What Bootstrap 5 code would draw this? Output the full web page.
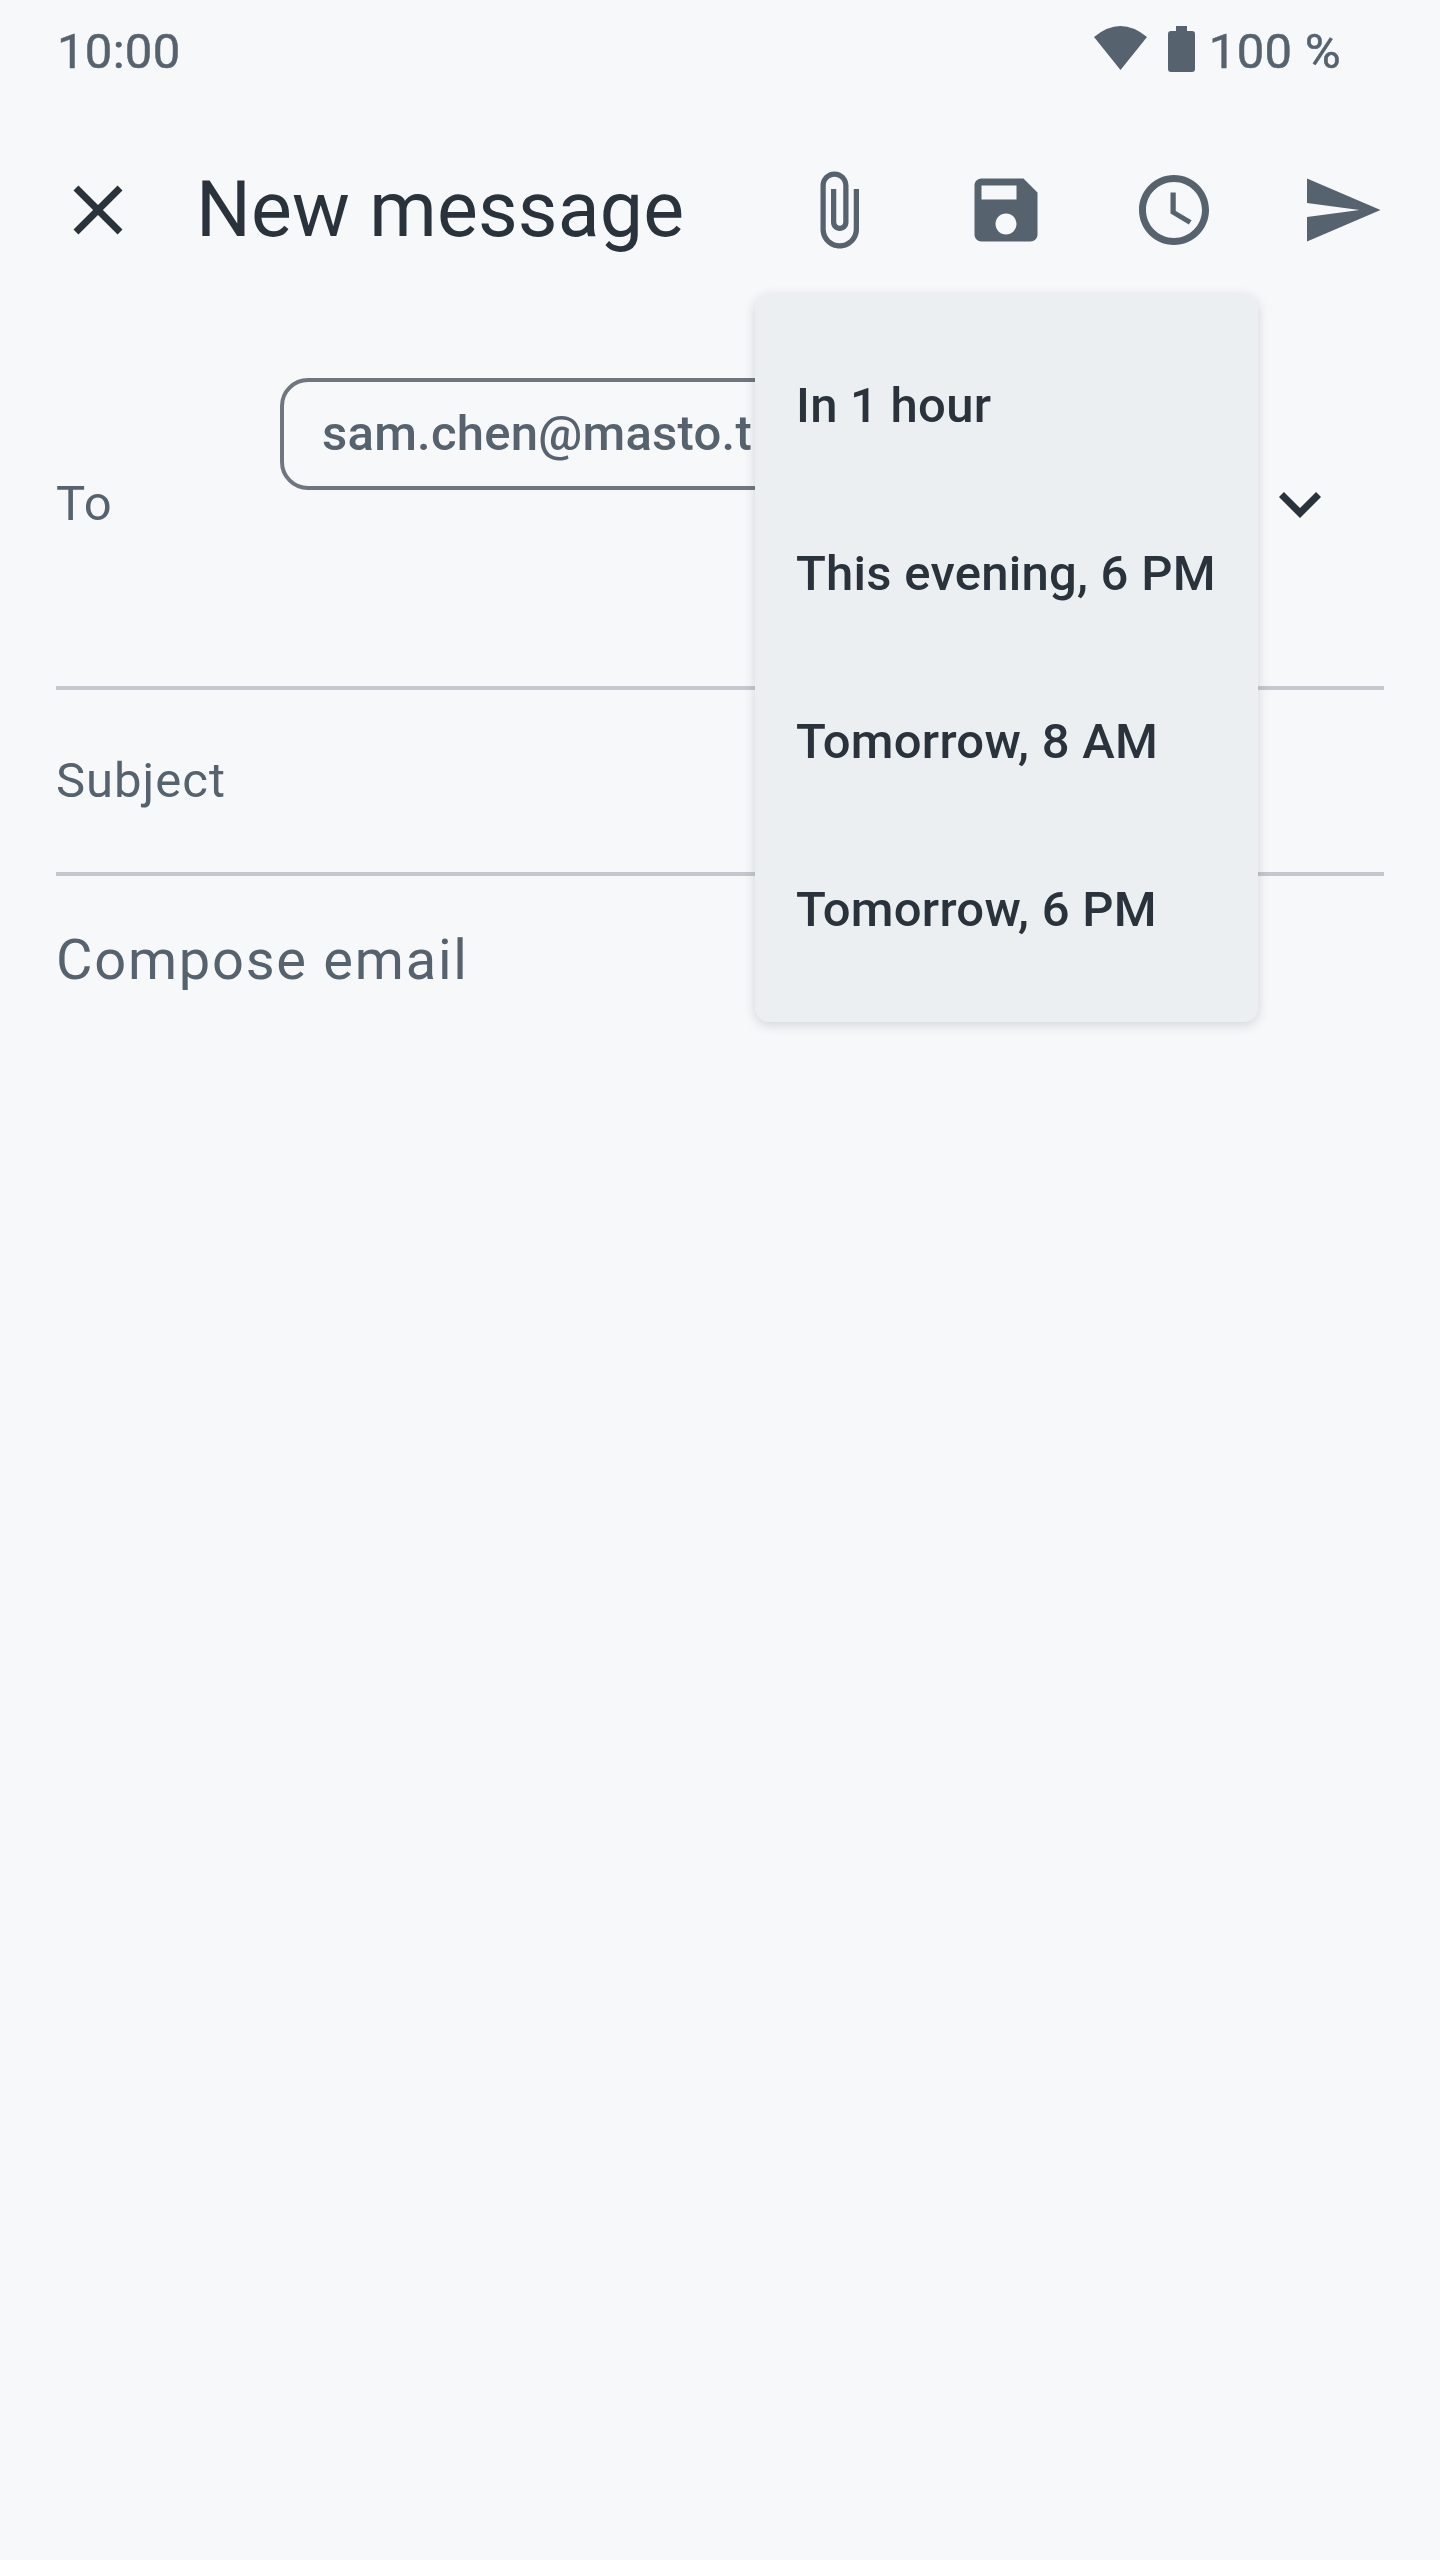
<!DOCTYPE html>
<html lang="en">
<head>
    <meta charset="UTF-8">
    <meta name="viewport" content="width=device-width, initial-scale=1.0">
    <title>New message</title>
    <link href="https://cdn.jsdelivr.net/npm/bootstrap@5.3.0/dist/css/bootstrap.min.css" rel="stylesheet">
    <style>
        body {
            background: #f7f8fa;
            font-family: Roboto, "Liberation Sans", sans-serif;
            color: #56626d;
        }
        .phone-screen {
            width: 1440px;
            height: 2560px;
            overflow: hidden;
        }
        .status-row {
            height: 112px;
            padding: 26px 99px 0 57px;
            font-size: 49px;
            line-height: 48px;
            letter-spacing: .3px;
            -webkit-text-stroke: .5px #56626d;
        }
        .status-time {
            padding-top: 2px;
        }
        .status-pct {
            padding-top: 2px;
            margin-left: 14px;
        }
        .battery-icon {
            margin-left: 21px;
        }
        .tool-row {
            height: 196px;
            padding: 0 56px;
        }
        .tool-title {
            margin-left: 56px;
            font-size: 77px;
            line-height: 90px;
            letter-spacing: .15px;
            color: #2a323c;
        }
        .tool-actions {
            gap: 84px;
        }
        .tool-icon {
            width: 84px;
            height: 84px;
            fill: #56626d;
            flex: none;
        }
        .close-icon, .chevron-icon {
            fill: #2a323c;
        }
        .field-row {
            margin: 0 56px;
            border-bottom: 4px solid #c4c8ce;
        }
        .to-row {
            height: 382px;
        }
        .subject-row {
            height: 186px;
        }
        .field-label {
            font-size: 49px;
            line-height: 56px;
            letter-spacing: 1px;
            width: 224px;
            flex: none;
        }
        .to-row .field-label {
            margin-top: 168px;
        }
        .subject-row .field-label {
            margin-top: 63px;
        }
        .recipient-chip {
            margin-top: 70px;
            width: 620px;
            height: 112px;
            padding-left: 38px;
            border: 4px solid #70767f;
            border-radius: 28px;
            font-size: 49px;
            font-weight: 500;
            line-height: 104px;
            letter-spacing: .25px;
            white-space: nowrap;
        }
        .chevron-icon {
            margin: 154px 42px 0 auto;
        }
        .compose-body {
            padding: 51px 56px 0;
            font-size: 56px;
            line-height: 66px;
            letter-spacing: 1.75px;
        }
        .dropdown-menu.send-later {
            top: 294px;
            left: 755px;
            width: 503px;
            padding: 28px 0;
            background: #eceff2;
            border: 0;
            border-radius: 14px;
            box-shadow: 0 3px 12px rgba(40, 50, 60, .18);
            font-size: 49px;
        }
        .send-later .dropdown-item {
            height: 168px;
            padding: 0 41px;
            line-height: 168px;
            letter-spacing: .25px;
            color: #2a323c;
            font-weight: 500;
        }
    </style>
</head>
<body>
    <div class="phone-screen position-relative">
        <!-- status bar -->
        <div class="status-row d-flex align-items-start">
            <span class="status-time">10:00</span>
            <svg class="ms-auto" width="53" height="44" viewBox="0 0 53 44"><path fill="#56626d" d="M26.5 44 0 11Q26.5-11 53 11Z"/></svg>
            <svg class="battery-icon" width="27" height="46" viewBox="0 0 27 46"><path fill="#56626d" d="M8 0h11v5h5a3 3 0 0 1 3 3v35a3 3 0 0 1-3 3H3a3 3 0 0 1-3-3V8a3 3 0 0 1 3-3h5z"/></svg>
            <span class="status-pct">100 %</span>
        </div>

        <!-- toolbar -->
        <div class="tool-row d-flex align-items-center">
            <svg class="tool-icon close-icon" viewBox="0 0 24 24"><path d="M19 6.41 17.59 5 12 10.59 6.41 5 5 6.41 10.59 12 5 17.59 6.41 19 12 13.41 17.59 19 19 17.59 13.41 12z"/></svg>
            <div class="tool-title">New message</div>
            <div class="tool-actions d-flex ms-auto">
                <svg class="tool-icon" viewBox="0 0 24 24"><path d="M16.5 6v11.5c0 2.21-1.79 4-4 4s-4-1.79-4-4V5c0-1.38 1.12-2.5 2.5-2.5s2.5 1.12 2.5 2.5v10.5c0 .55-.45 1-1 1s-1-.45-1-1V6H10v9.500c0 1.38 1.12 2.500 2.500 2.500s2.500-1.120 2.500-2.500V5c0-2.210-1.790-4-4-4S7 2.790 7 5v12.500c0 3.040 2.460 5.500 5.500 5.500s5.500-2.460 5.500-5.500V6h-1.500z"/></svg>
                <svg class="tool-icon" viewBox="0 0 24 24"><path d="M17 3H5c-1.110 0-2 .9-2 2v14c0 1.100.89 2 2 2h14c1.100 0 2-.9 2-2V7l-4-4zm-5 16c-1.660 0-3-1.340-3-3s1.340-3 3-3 3 1.340 3 3-1.340 3-3 3zm3-10H5V5h10v4z"/></svg>
                <svg class="tool-icon" viewBox="0 0 24 24"><path d="M11.990 2C6.470 2 2 6.480 2 12s4.470 10 9.990 10C17.520 22 22 17.520 22 12S17.520 2 11.990 2zM12 20c-4.420 0-8-3.580-8-8s3.580-8 8-8 8 3.580 8 8-3.580 8-8 8z"/><path d="M12.500 7H11v6l5.250 3.150.75-1.230-4.500-2.670z"/></svg>
                <svg class="tool-icon" viewBox="0 0 24 24"><path d="M2.010 21 23 12 2.010 3 2 10l15 2-15 2z"/></svg>
            </div>
        </div>

        <!-- compose fields -->
        <div class="field-row to-row d-flex align-items-start">
            <div class="field-label">To</div>
            <div class="recipient-chip">sam.chen@masto.t</div>
            <svg class="tool-icon chevron-icon" viewBox="0 0 24 24"><path d="M16.590 8.590 12 13.170 7.410 8.590 6 10l6 6 6-6z"/></svg>
        </div>
        <div class="field-row subject-row d-flex align-items-start">
            <div class="field-label">Subject</div>
        </div>
        <div class="compose-body">Compose email</div>

        <!-- send later menu -->
        <ul class="dropdown-menu show send-later">
            <li><a class="dropdown-item" href="#">In 1 hour</a></li>
            <li><a class="dropdown-item" href="#">This evening, 6 PM</a></li>
            <li><a class="dropdown-item" href="#">Tomorrow, 8 AM</a></li>
            <li><a class="dropdown-item" href="#">Tomorrow, 6 PM</a></li>
        </ul>
    </div>
    <script src="https://cdn.jsdelivr.net/npm/bootstrap@5.3.0/dist/js/bootstrap.bundle.min.js"></script>
</body>
</html>
